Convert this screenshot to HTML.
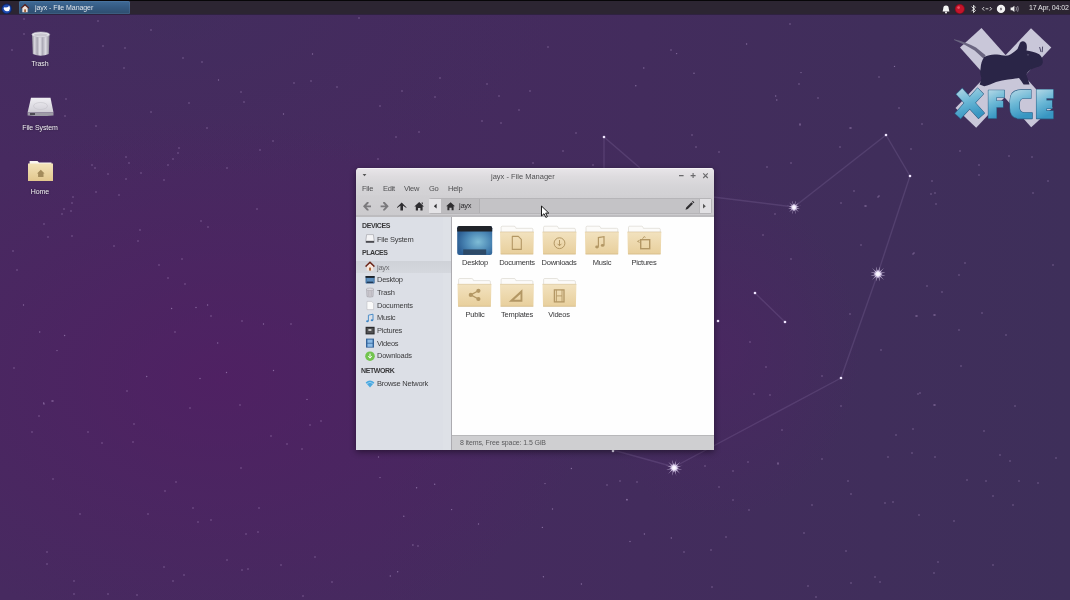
<!DOCTYPE html>
<html><head><meta charset="utf-8">
<style>
*{margin:0;padding:0;box-sizing:border-box}
.t,.dlabel,.t7{-webkit-font-smoothing:antialiased;will-change:transform}
html,body{width:1070px;height:600px;overflow:hidden}
body{position:relative;font-family:"Liberation Sans",sans-serif;
background:linear-gradient(90deg,#472a60 0%,#462a5f 35%,#432c5d 60%,#402e5b 82%,#3e2f5a 100%);}
.abs{position:absolute}
#glow{left:0;top:0;width:1070px;height:600px;
background:radial-gradient(ellipse 380px 260px at 220px 380px,rgba(82,30,100,0.75),rgba(82,30,100,0) 100%),radial-gradient(ellipse 380px 160px at 180px 20px,rgba(62,48,92,0.45),rgba(62,48,92,0) 100%),radial-gradient(ellipse 140px 170px at 720px 350px,rgba(78,36,100,0.55),rgba(78,36,100,0) 100%);}
#panel{left:0;top:0;width:1070px;height:14px;background:#2c2532;border-top:1px solid #070608}
.dlabel{color:#f2f0f4;font-size:7px;letter-spacing:-0.1px;text-shadow:0 0 2px rgba(0,0,0,0.6);white-space:nowrap;text-align:center;width:60px}
#win{left:356px;top:168px;width:357.6px;height:281.6px;border-radius:4px 4px 0 0;overflow:hidden;
box-shadow:0 2px 6px rgba(0,0,0,0.45);background:#d4d4d6}
#win .t{white-space:nowrap;color:#4a4a4c;font-size:7.5px;letter-spacing:-0.25px}
</style></head><body>
<div id="glow" class="abs"></div>
<svg id="sky" class="abs" style="left:0;top:0" width="1070" height="600" viewBox="0 0 1070 600">
<g fill="#b9a0d2" fill-opacity="0.55">
<circle cx="24.0" cy="19.0" r="0.7"/>
<circle cx="98.0" cy="21.0" r="0.7"/>
<circle cx="151.0" cy="30.0" r="0.7"/>
<circle cx="24.0" cy="34.0" r="0.7"/>
<circle cx="12.0" cy="50.0" r="0.7"/>
<circle cx="103.0" cy="46.0" r="0.7"/>
<circle cx="125.0" cy="48.0" r="0.7"/>
<circle cx="183.0" cy="58.0" r="0.7"/>
<circle cx="202.0" cy="62.0" r="0.7"/>
<circle cx="124.0" cy="68.0" r="0.7"/>
<circle cx="218.5" cy="80.0" r="0.7"/>
<circle cx="241.0" cy="92.0" r="0.7"/>
<circle cx="244.0" cy="102.0" r="0.7"/>
<circle cx="189.0" cy="103.0" r="0.7"/>
<circle cx="151.0" cy="112.0" r="0.7"/>
<circle cx="66.0" cy="99.0" r="0.7"/>
<circle cx="65.0" cy="116.0" r="0.7"/>
<circle cx="96.0" cy="126.0" r="0.7"/>
<circle cx="207.0" cy="128.0" r="0.7"/>
<circle cx="179.0" cy="148.0" r="0.7"/>
<circle cx="126.0" cy="157.0" r="0.7"/>
<circle cx="129.0" cy="163.0" r="0.7"/>
<circle cx="178.0" cy="153.0" r="0.7"/>
<circle cx="173.0" cy="159.0" r="0.7"/>
<circle cx="168.0" cy="165.0" r="0.7"/>
<circle cx="141.0" cy="173.0" r="0.7"/>
<circle cx="126.0" cy="179.0" r="0.7"/>
<circle cx="164.0" cy="180.0" r="0.7"/>
<circle cx="92.0" cy="165.0" r="0.7"/>
<circle cx="95.0" cy="168.0" r="0.7"/>
<circle cx="108.0" cy="174.0" r="0.7"/>
<circle cx="260.0" cy="150.0" r="0.7"/>
<circle cx="227.0" cy="168.0" r="0.7"/>
<circle cx="96.0" cy="192.0" r="0.7"/>
<circle cx="119.0" cy="195.0" r="0.7"/>
<circle cx="73.0" cy="197.0" r="0.7"/>
<circle cx="72.0" cy="203.0" r="0.7"/>
<circle cx="64.0" cy="209.0" r="0.7"/>
<circle cx="71.0" cy="211.0" r="0.7"/>
<circle cx="62.0" cy="214.0" r="0.7"/>
<circle cx="44.0" cy="224.0" r="0.7"/>
<circle cx="48.0" cy="237.0" r="0.7"/>
<circle cx="72.0" cy="236.0" r="0.7"/>
<circle cx="114.0" cy="246.0" r="0.7"/>
<circle cx="13.0" cy="251.0" r="0.7"/>
<circle cx="17.0" cy="270.0" r="0.7"/>
<circle cx="140.0" cy="230.0" r="0.7"/>
<circle cx="138.0" cy="241.0" r="0.7"/>
<circle cx="201.0" cy="221.0" r="0.7"/>
<circle cx="208.0" cy="227.0" r="0.7"/>
<circle cx="257.0" cy="209.0" r="0.7"/>
<circle cx="182.0" cy="259.0" r="0.7"/>
<circle cx="159.0" cy="265.0" r="0.7"/>
<circle cx="168.0" cy="278.0" r="0.7"/>
<circle cx="185.0" cy="284.0" r="0.7"/>
<circle cx="44.0" cy="404.0" r="0.7"/>
<circle cx="53.0" cy="401.0" r="0.7"/>
<circle cx="39.0" cy="416.0" r="0.7"/>
<circle cx="32.0" cy="432.0" r="0.7"/>
<circle cx="88.0" cy="432.0" r="0.7"/>
<circle cx="102.0" cy="443.0" r="0.7"/>
<circle cx="134.0" cy="424.0" r="0.7"/>
<circle cx="133.0" cy="442.0" r="0.7"/>
<circle cx="190.0" cy="408.0" r="0.7"/>
<circle cx="240.0" cy="405.0" r="0.7"/>
<circle cx="271.0" cy="436.0" r="0.7"/>
<circle cx="287.0" cy="444.0" r="0.7"/>
<circle cx="302.0" cy="449.0" r="0.7"/>
<circle cx="310.0" cy="425.0" r="0.7"/>
<circle cx="321.0" cy="421.0" r="0.7"/>
<circle cx="241.0" cy="468.0" r="0.7"/>
<circle cx="176.0" cy="482.0" r="0.7"/>
<circle cx="165.0" cy="491.0" r="0.7"/>
<circle cx="53.0" cy="479.0" r="0.7"/>
<circle cx="80.0" cy="514.0" r="0.7"/>
<circle cx="148.0" cy="514.0" r="0.7"/>
<circle cx="193.0" cy="508.0" r="0.7"/>
<circle cx="198.0" cy="522.0" r="0.7"/>
<circle cx="211.0" cy="520.0" r="0.7"/>
<circle cx="259.0" cy="508.0" r="0.7"/>
<circle cx="246.0" cy="534.0" r="0.7"/>
<circle cx="258.0" cy="532.0" r="0.7"/>
<circle cx="47.0" cy="552.0" r="0.7"/>
<circle cx="47.0" cy="564.0" r="0.7"/>
<circle cx="164.0" cy="567.0" r="0.7"/>
<circle cx="184.0" cy="575.0" r="0.7"/>
<circle cx="173.0" cy="581.0" r="0.7"/>
<circle cx="227.0" cy="560.0" r="0.7"/>
<circle cx="242.0" cy="570.0" r="0.7"/>
<circle cx="248.0" cy="569.0" r="0.7"/>
<circle cx="281.0" cy="565.0" r="0.7"/>
<circle cx="315.0" cy="557.0" r="0.7"/>
<circle cx="332.0" cy="582.0" r="0.7"/>
<circle cx="74.0" cy="581.0" r="0.7"/>
<circle cx="74.0" cy="594.0" r="0.7"/>
<circle cx="108.0" cy="594.0" r="0.7"/>
<circle cx="137.0" cy="595.0" r="0.7"/>
<circle cx="303.0" cy="596.0" r="0.7"/>
<circle cx="841.0" cy="406.0" r="0.7"/>
<circle cx="935.0" cy="405.0" r="0.7"/>
<circle cx="1015.0" cy="406.0" r="0.7"/>
<circle cx="782.0" cy="430.0" r="0.7"/>
<circle cx="896.0" cy="435.0" r="0.7"/>
<circle cx="913.0" cy="429.0" r="0.7"/>
<circle cx="984.0" cy="431.0" r="0.7"/>
<circle cx="748.0" cy="462.0" r="0.7"/>
<circle cx="778.0" cy="464.0" r="0.7"/>
<circle cx="822.0" cy="459.0" r="0.7"/>
<circle cx="705.0" cy="466.0" r="0.7"/>
<circle cx="733.0" cy="471.0" r="0.7"/>
<circle cx="888.0" cy="457.0" r="0.7"/>
<circle cx="912.0" cy="453.0" r="0.7"/>
<circle cx="935.0" cy="457.0" r="0.7"/>
<circle cx="1000.0" cy="455.0" r="0.7"/>
<circle cx="1010.0" cy="461.0" r="0.7"/>
<circle cx="1056.0" cy="458.0" r="0.7"/>
<circle cx="719.0" cy="487.0" r="0.7"/>
<circle cx="733.0" cy="500.0" r="0.7"/>
<circle cx="749.0" cy="510.0" r="0.7"/>
<circle cx="848.0" cy="481.0" r="0.7"/>
<circle cx="851.0" cy="494.0" r="0.7"/>
<circle cx="812.0" cy="505.0" r="0.7"/>
<circle cx="885.0" cy="503.0" r="0.7"/>
<circle cx="893.0" cy="502.0" r="0.7"/>
<circle cx="967.0" cy="480.0" r="0.7"/>
<circle cx="986.0" cy="481.0" r="0.7"/>
<circle cx="1019.0" cy="481.0" r="0.7"/>
<circle cx="1038.0" cy="483.0" r="0.7"/>
<circle cx="993.0" cy="496.0" r="0.7"/>
<circle cx="1013.0" cy="505.0" r="0.7"/>
<circle cx="919.0" cy="515.0" r="0.7"/>
<circle cx="954.0" cy="521.0" r="0.7"/>
<circle cx="726.0" cy="537.0" r="0.7"/>
<circle cx="711.0" cy="550.0" r="0.7"/>
<circle cx="804.0" cy="533.0" r="0.7"/>
<circle cx="846.0" cy="551.0" r="0.7"/>
<circle cx="938.0" cy="562.0" r="0.7"/>
<circle cx="934.0" cy="573.0" r="0.7"/>
<circle cx="993.0" cy="565.0" r="0.7"/>
<circle cx="712.0" cy="587.0" r="0.7"/>
<circle cx="808.0" cy="586.0" r="0.7"/>
<circle cx="851.0" cy="583.0" r="0.7"/>
<circle cx="875.0" cy="577.0" r="0.7"/>
<circle cx="880.0" cy="582.0" r="0.7"/>
<circle cx="816.0" cy="597.0" r="0.7"/>
<circle cx="850.0" cy="128.0" r="0.7"/>
<circle cx="840.0" cy="147.0" r="0.7"/>
<circle cx="911.0" cy="149.0" r="0.7"/>
<circle cx="960.0" cy="151.0" r="0.7"/>
<circle cx="922.0" cy="124.0" r="0.7"/>
<circle cx="1009.0" cy="156.0" r="0.7"/>
<circle cx="1032.0" cy="157.0" r="0.7"/>
<circle cx="979.0" cy="165.0" r="0.7"/>
<circle cx="979.0" cy="175.0" r="0.7"/>
<circle cx="854.0" cy="191.0" r="0.7"/>
<circle cx="841.0" cy="203.0" r="0.7"/>
<circle cx="866.0" cy="206.0" r="0.7"/>
<circle cx="879.0" cy="196.0" r="0.7"/>
<circle cx="932.0" cy="181.0" r="0.7"/>
<circle cx="935.0" cy="193.0" r="0.7"/>
<circle cx="936.0" cy="204.0" r="0.7"/>
<circle cx="1048.0" cy="181.0" r="0.7"/>
<circle cx="1033.0" cy="193.0" r="0.7"/>
<circle cx="861.0" cy="245.0" r="0.7"/>
<circle cx="913.0" cy="254.0" r="0.7"/>
<circle cx="965.0" cy="263.0" r="0.7"/>
<circle cx="959.0" cy="275.0" r="0.7"/>
<circle cx="927.0" cy="286.0" r="0.7"/>
<circle cx="942.0" cy="292.0" r="0.7"/>
<circle cx="1053.0" cy="265.0" r="0.7"/>
<circle cx="917.0" cy="316.0" r="0.7"/>
<circle cx="935.0" cy="315.0" r="0.7"/>
<circle cx="982.0" cy="313.0" r="0.7"/>
<circle cx="850.0" cy="314.0" r="0.7"/>
<circle cx="959.0" cy="330.0" r="0.7"/>
<circle cx="1006.0" cy="335.0" r="0.7"/>
<circle cx="881.0" cy="350.0" r="0.7"/>
<circle cx="961.0" cy="366.0" r="0.7"/>
<circle cx="918.0" cy="394.0" r="0.7"/>
<circle cx="822.0" cy="376.0" r="0.7"/>
<circle cx="800.0" cy="125.0" r="0.7"/>
<circle cx="692.0" cy="135.0" r="0.7"/>
<circle cx="719.0" cy="152.0" r="0.7"/>
<circle cx="696.0" cy="147.0" r="0.7"/>
<circle cx="767.0" cy="167.0" r="0.7"/>
<circle cx="791.0" cy="163.0" r="0.7"/>
<circle cx="593.0" cy="165.0" r="0.7"/>
<circle cx="865.0" cy="206.0" r="0.7"/>
<circle cx="878.0" cy="197.0" r="0.7"/>
<circle cx="775.0" cy="214.0" r="0.7"/>
<circle cx="763.0" cy="235.0" r="0.7"/>
<circle cx="791.0" cy="259.0" r="0.7"/>
<circle cx="914.0" cy="253.0" r="0.7"/>
<circle cx="931.0" cy="194.0" r="0.7"/>
<circle cx="750.0" cy="342.0" r="0.7"/>
<circle cx="766.0" cy="367.0" r="0.7"/>
<circle cx="754.0" cy="394.0" r="0.7"/>
<circle cx="770.0" cy="395.0" r="0.7"/>
<circle cx="778.0" cy="463.0" r="0.7"/>
<circle cx="620.0" cy="481.0" r="0.7"/>
<circle cx="637.0" cy="482.0" r="0.7"/>
<circle cx="607.0" cy="485.0" r="0.7"/>
<circle cx="627.0" cy="500.0" r="0.7"/>
<circle cx="916.0" cy="316.0" r="0.7"/>
<circle cx="934.0" cy="315.0" r="0.7"/>
<circle cx="920.0" cy="393.0" r="0.7"/>
<circle cx="934.0" cy="405.0" r="0.7"/>
<circle cx="576.0" cy="133.0" r="0.7"/>
<circle cx="563.0" cy="151.0" r="0.7"/>
<circle cx="359.0" cy="18.0" r="0.7"/>
<circle cx="312.5" cy="54.0" r="0.7"/>
<circle cx="548.0" cy="47.0" r="0.7"/>
<circle cx="294.0" cy="83.0" r="0.7"/>
<circle cx="311.0" cy="81.0" r="0.7"/>
<circle cx="337.0" cy="87.0" r="0.7"/>
<circle cx="440.0" cy="78.0" r="0.7"/>
<circle cx="402.0" cy="91.0" r="0.7"/>
<circle cx="435.0" cy="97.0" r="0.7"/>
<circle cx="487.0" cy="84.0" r="0.7"/>
<circle cx="499.0" cy="96.0" r="0.7"/>
<circle cx="530.0" cy="91.0" r="0.7"/>
<circle cx="519.0" cy="110.0" r="0.7"/>
<circle cx="380.0" cy="106.0" r="0.7"/>
<circle cx="283.5" cy="114.0" r="0.7"/>
<circle cx="482.0" cy="121.0" r="0.7"/>
<circle cx="501.0" cy="123.0" r="0.7"/>
<circle cx="419.0" cy="132.0" r="0.7"/>
<circle cx="396.0" cy="137.0" r="0.7"/>
<circle cx="273.0" cy="141.0" r="0.7"/>
<circle cx="378.0" cy="159.0" r="0.7"/>
<circle cx="533.0" cy="163.0" r="0.7"/>
<circle cx="23.5" cy="305.0" r="0.7"/>
<circle cx="171.6" cy="308.5" r="0.7"/>
<circle cx="196.0" cy="307.5" r="0.7"/>
<circle cx="207.6" cy="305.0" r="0.7"/>
<circle cx="211.0" cy="316.0" r="0.7"/>
<circle cx="242.0" cy="321.0" r="0.7"/>
<circle cx="263.5" cy="324.0" r="0.7"/>
<circle cx="291.0" cy="324.0" r="0.7"/>
<circle cx="39.7" cy="332.0" r="0.7"/>
<circle cx="64.6" cy="335.5" r="0.7"/>
<circle cx="175.0" cy="332.0" r="0.7"/>
<circle cx="57.0" cy="350.6" r="0.7"/>
<circle cx="217.7" cy="343.0" r="0.7"/>
<circle cx="14.0" cy="368.0" r="0.7"/>
<circle cx="146.7" cy="376.5" r="0.7"/>
<circle cx="200.0" cy="378.5" r="0.7"/>
<circle cx="226.5" cy="372.5" r="0.7"/>
<circle cx="273.5" cy="370.5" r="0.7"/>
<circle cx="127.0" cy="391.0" r="0.7"/>
<circle cx="307.0" cy="399.4" r="0.7"/>
<circle cx="43.7" cy="403.0" r="0.7"/>
<circle cx="52.0" cy="401.0" r="0.7"/>
<circle cx="378.5" cy="457.0" r="0.7"/>
<circle cx="380.0" cy="477.6" r="0.7"/>
<circle cx="416.6" cy="487.7" r="0.7"/>
<circle cx="434.7" cy="484.3" r="0.7"/>
<circle cx="451.6" cy="509.6" r="0.7"/>
<circle cx="403.8" cy="516.3" r="0.7"/>
<circle cx="478.5" cy="524.0" r="0.7"/>
<circle cx="545.0" cy="483.6" r="0.7"/>
<circle cx="571.4" cy="468.5" r="0.7"/>
<circle cx="552.5" cy="509.0" r="0.7"/>
<circle cx="542.4" cy="527.4" r="0.7"/>
<circle cx="626.9" cy="499.5" r="0.7"/>
<circle cx="644.4" cy="534.0" r="0.7"/>
<circle cx="630.0" cy="541.5" r="0.7"/>
<circle cx="671.3" cy="538.0" r="0.7"/>
<circle cx="684.0" cy="552.0" r="0.7"/>
<circle cx="412.9" cy="545.0" r="0.7"/>
<circle cx="418.0" cy="546.0" r="0.7"/>
<circle cx="397.7" cy="571.8" r="0.7"/>
<circle cx="390.3" cy="576.0" r="0.7"/>
<circle cx="543.4" cy="576.8" r="0.7"/>
<circle cx="581.4" cy="584.0" r="0.7"/>
<circle cx="790.0" cy="24.0" r="0.7"/>
<circle cx="746.6" cy="44.0" r="0.7"/>
<circle cx="671.0" cy="50.0" r="0.7"/>
<circle cx="676.6" cy="53.6" r="0.7"/>
<circle cx="643.8" cy="68.0" r="0.7"/>
<circle cx="635.8" cy="85.7" r="0.7"/>
<circle cx="694.0" cy="73.3" r="0.7"/>
<circle cx="801.0" cy="72.6" r="0.7"/>
<circle cx="799.0" cy="84.0" r="0.7"/>
<circle cx="775.7" cy="96.0" r="0.7"/>
<circle cx="776.8" cy="100.0" r="0.7"/>
<circle cx="818.0" cy="98.0" r="0.7"/>
<circle cx="879.0" cy="77.0" r="0.7"/>
<circle cx="894.5" cy="66.4" r="0.7"/>
<circle cx="899.0" cy="108.0" r="0.7"/>
<circle cx="800.0" cy="124.0" r="0.7"/>
<circle cx="851.0" cy="128.0" r="0.7"/>
</g>
<g stroke="#b09ad0" stroke-opacity="0.17" stroke-width="1.4">
<line x1="604" y1="137" x2="604" y2="170"/>
<line x1="604" y1="137" x2="640" y2="168"/>
<line x1="713" y1="197" x2="794" y2="207"/>
<line x1="794" y1="207" x2="886" y2="135"/>
<line x1="886" y1="135" x2="910" y2="176"/>
<line x1="910" y1="176" x2="878" y2="273"/>
<line x1="878" y1="273" x2="841" y2="378"/>
<line x1="841" y1="378" x2="674" y2="467"/>
<line x1="674" y1="467" x2="613" y2="450"/>
<line x1="755" y1="293" x2="785" y2="322"/>
</g>
<g fill="#f0e6ff">
<circle cx="604" cy="137" r="1.3"/>
<circle cx="886" cy="135" r="1.3"/>
<circle cx="910" cy="176" r="1.3"/>
<circle cx="755" cy="293" r="1.3"/>
<circle cx="785" cy="322" r="1.3"/>
<circle cx="718" cy="321" r="1.3"/>
<circle cx="841" cy="378" r="1.3"/>
<circle cx="613" cy="451" r="1.3"/>
</g>
<defs><radialGradient id="ray" cx="0.5" cy="0.5" r="0.5"><stop offset="0" stop-color="#fff" stop-opacity="1"/><stop offset="1" stop-color="#e8d8ff" stop-opacity="0"/></radialGradient><radialGradient id="sglow" cx="0.5" cy="0.5" r="0.5"><stop offset="0" stop-color="#fff" stop-opacity="1"/><stop offset="0.45" stop-color="#f4ecff" stop-opacity="0.9"/><stop offset="1" stop-color="#d0b8f0" stop-opacity="0"/></radialGradient></defs>
<g transform="translate(794,207.4) scale(0.8)"><ellipse rx="9.5" ry="1.05" fill="url(#ray)" transform="rotate(15)"/><ellipse rx="9.5" ry="1.05" fill="url(#ray)" transform="rotate(45)"/><ellipse rx="9.5" ry="1.05" fill="url(#ray)" transform="rotate(75)"/><ellipse rx="9.5" ry="1.05" fill="url(#ray)" transform="rotate(105)"/><ellipse rx="9.5" ry="1.05" fill="url(#ray)" transform="rotate(135)"/><ellipse rx="9.5" ry="1.05" fill="url(#ray)" transform="rotate(165)"/><circle r="4.8" fill="url(#sglow)"/></g>
<g transform="translate(878,274) scale(0.95)"><ellipse rx="9.5" ry="1.05" fill="url(#ray)" transform="rotate(15)"/><ellipse rx="9.5" ry="1.05" fill="url(#ray)" transform="rotate(45)"/><ellipse rx="9.5" ry="1.05" fill="url(#ray)" transform="rotate(75)"/><ellipse rx="9.5" ry="1.05" fill="url(#ray)" transform="rotate(105)"/><ellipse rx="9.5" ry="1.05" fill="url(#ray)" transform="rotate(135)"/><ellipse rx="9.5" ry="1.05" fill="url(#ray)" transform="rotate(165)"/><circle r="4.8" fill="url(#sglow)"/></g>
<g transform="translate(674.2,467.8) scale(0.95)"><ellipse rx="9.5" ry="1.05" fill="url(#ray)" transform="rotate(15)"/><ellipse rx="9.5" ry="1.05" fill="url(#ray)" transform="rotate(45)"/><ellipse rx="9.5" ry="1.05" fill="url(#ray)" transform="rotate(75)"/><ellipse rx="9.5" ry="1.05" fill="url(#ray)" transform="rotate(105)"/><ellipse rx="9.5" ry="1.05" fill="url(#ray)" transform="rotate(135)"/><ellipse rx="9.5" ry="1.05" fill="url(#ray)" transform="rotate(165)"/><circle r="4.8" fill="url(#sglow)"/></g>
</svg>
<div id="panel" class="abs">
 <svg class="abs" style="left:0;top:0" width="1070" height="15">
  <circle cx="6.7" cy="7.85" r="5.3" fill="#0e2566"/>
  <circle cx="6.7" cy="7.85" r="4.4" fill="#1f4cb0"/>
  <path d="M3.6,7.2 Q4.2,5.6 6,6.6 L8.2,6 L9,4.4 L9.6,5.6 L10,7.4 Q9.8,10 7.2,10.2 Q4.4,10.4 3.6,7.2Z" fill="#fff"/>
 </svg>
 <div class="abs" style="left:19.3px;top:0px;width:110.7px;height:13px;border-radius:1.5px;background:linear-gradient(#3f6a96,#345a82 50%,#2e4d6e);box-shadow:inset 0 0 0 0.5px rgba(120,160,200,0.35)"></div>
 <svg class="abs" style="left:20.3px;top:1.8px" width="10" height="10" viewBox="0 0 12 12">
  <path d="M1.5,6.2 L6,2 L10.5,6.2" fill="none" stroke="#5a1f1a" stroke-width="1.6"/>
  <path d="M2.8,6 L6,3.2 L9.2,6 L9.2,11 L2.8,11Z" fill="#f3e2d8"/>
  <rect x="5" y="7.6" width="2.2" height="3.4" fill="#a0623a"/>
 </svg>
 <div class="abs t7" style="left:34.7px;top:1px;color:#dfe4ea;font-size:7px;letter-spacing:-0.07px;line-height:12px;white-space:nowrap">jayx - File Manager</div>
 <svg class="abs" style="left:930px;top:0" width="140" height="15" viewBox="930 0 140 15">
  <path d="M946,4.6 Q948.8,4.6 948.8,8 L949.4,10.6 L942.6,10.6 L943.2,8 Q943.2,4.6 946,4.6Z" fill="#f4f4f4"/>
  <circle cx="946" cy="11.6" r="1" fill="#f4f4f4"/>
  <circle cx="959.8" cy="8" r="5" fill="#8e0c1e"/>
  <circle cx="959.8" cy="8" r="4.2" fill="#c4142a"/>
  <circle cx="958.6" cy="6.6" r="1.4" fill="#f06070" opacity="0.8"/>
  <path d="M971.6,5.6 L975.4,9.6 L973.5,11.6 L973.5,4.2 L975.4,6.2 L971.6,10.2" fill="none" stroke="#e8e8e8" stroke-width="0.9"/>
  <path d="M984.2,6 L982.4,7.8 L984.2,9.6 M989.8,6 L991.6,7.8 L989.8,9.6 M985.6,7.8 L988.4,7.8" fill="none" stroke="#e8e8e8" stroke-width="0.9"/>
  <circle cx="1001" cy="7.9" r="4.2" fill="#f4f4f4"/>
  <path d="M1001.6,5.2 L999.8,8.4 L1001.2,8.4 L1000.4,10.6 L1002.2,7.4 L1000.8,7.4Z" fill="#2c2532"/>
  <path d="M1010.6,6.6 L1012.2,6.6 L1014.4,4.8 L1014.4,11 L1012.2,9.2 L1010.6,9.2Z" fill="#f0f0f0"/>
  <path d="M1016,6 Q1017,7.9 1016,9.8 M1017.6,5 Q1019,7.9 1017.6,10.8" fill="none" stroke="#9a96a0" stroke-width="0.9"/>
 </svg>
 <div class="abs t7" style="left:1028.8px;top:1px;color:#e6e6e8;font-size:7px;letter-spacing:-0.12px;line-height:12px;white-space:nowrap">17 Apr, 04:02</div>
</div>
<div class="abs" style="left:0;top:14px;width:1070px;height:1px;background:#2f2240"></div>
<div id="desk">
 <svg class="abs" style="left:28px;top:29.8px" width="26" height="28" viewBox="0 0 26 28">
  <defs>
   <linearGradient id="can" x1="0" x2="1" y1="0" y2="0">
    <stop offset="0" stop-color="#8f8c98"/><stop offset="0.15" stop-color="#d8d6de"/><stop offset="0.3" stop-color="#a9a6b2"/>
    <stop offset="0.45" stop-color="#e4e2ea"/><stop offset="0.6" stop-color="#aeabb8"/><stop offset="0.78" stop-color="#dcdae2"/><stop offset="1" stop-color="#8a8794"/>
   </linearGradient>
  </defs>
  <path d="M4,5 L21.5,5 L20.8,24 Q12.8,27.5 4.8,24Z" fill="url(#can)"/>
  <ellipse cx="12.8" cy="4.6" rx="8.9" ry="2.6" fill="#e9e8ee" stroke="#b9b7c2" stroke-width="0.6"/>
  <ellipse cx="12.8" cy="4.9" rx="7" ry="1.6" fill="#c9c7d0"/>
 </svg>
 <div class="abs dlabel" style="left:10px;top:60px;line-height:7px">Trash</div>
 <svg class="abs" style="left:27px;top:97px" width="28" height="20" viewBox="0 0 28 20">
  <defs>
   <linearGradient id="drv" x1="0" x2="0" y1="0" y2="1">
    <stop offset="0" stop-color="#f0eff3"/><stop offset="1" stop-color="#cfcdd5"/>
   </linearGradient>
  </defs>
  <path d="M4,0.8 L23.5,0.8 L26.5,15.5 L0.6,15.5Z" fill="url(#drv)"/>
  <ellipse cx="13.5" cy="9" rx="7" ry="3.5" fill="none" stroke="#c4c2ca" stroke-width="0.6"/>
  <path d="M0.6,15.5 L26.5,15.5 L26.5,18.6 Q13.5,19.6 0.6,18.6Z" fill="#9e9ca6"/>
  <rect x="3" y="16.2" width="5" height="1.6" fill="#3a3840"/>
 </svg>
 <div class="abs dlabel" style="left:9.5px;top:124px;line-height:7px">File System</div>
 <svg class="abs" style="left:27px;top:160px" width="27" height="22" viewBox="0 0 27 22">
  <defs>
   <linearGradient id="hfold" x1="0" x2="0" y1="0" y2="1">
    <stop offset="0" stop-color="#f3e3b8"/><stop offset="1" stop-color="#e2c78e"/>
   </linearGradient>
  </defs>
  <path d="M2.6,1 L10.5,1 L12,2.4 L24.5,2.4 L24.5,6 L2.6,6Z" fill="#faf6f0"/>
  <path d="M1,3.5 L26,3.5 L26,21 L1,21Z" fill="url(#hfold)"/>
  <path d="M13.8,9.8 L17.6,13.4 L16.5,13.4 L16.5,17 L11.1,17 L11.1,13.4 L10,13.4Z" fill="#a48c5c"/>
 </svg>
 <div class="abs dlabel" style="left:10.4px;top:188px;line-height:7px">Home</div>
</div>
<svg id="logo" class="abs" style="left:940px;top:20px" width="130" height="115" viewBox="940 20 130 115">
 <defs>
  <linearGradient id="xf" x1="0" x2="0.3" y1="0" y2="1">
   <stop offset="0" stop-color="#b4d8e6"/><stop offset="0.5" stop-color="#6cb8d6"/><stop offset="1" stop-color="#3896c2"/>
  </linearGradient>
 </defs>
 <g fill="#c9c7d9">
  <path d="M960,47.5 L981.5,28 L1052.7,107.8 L1031.2,127.3Z"/>
  <path d="M1051.3,47.5 L1031,28.2 L955.5,108 L976.2,127.8Z"/>
 </g>
 <path d="M954,39.2 Q966,41.8 976,47.6 L985.6,55.2 L983.4,58.4 L974.6,50.6 Q965,44.2 954,39.9Z" fill="#6a6580"/>
 <path d="M984.2,57 C988,55 993,54 997,54.6 C1001,55.2 1005,56 1008,55.5 C1011,54.5 1014,52 1017.5,49 L1019.5,44 C1020.5,41 1023.5,40.5 1025.5,42.5 C1027,44 1027.2,47 1026.5,50.5 C1030,51 1035,52 1039.2,54.2 C1041.5,56 1043,59 1042.8,62.5 C1042,65.5 1040,66.5 1036,67.5 C1032,68.5 1028,71 1026.3,74.4 C1027,77 1028.5,80 1029.5,84.5 L1023.6,84.5 C1022,82 1020.5,80 1019,78 C1015,78.5 1011,79 1008,79.5 C1004,80 1000,81 996,82 C992,83.5 988,85.5 984.2,86.3 L979.6,84.5 C980.5,82 981,80 981.4,78 C980.2,75 979.8,72 980.5,69 C980.8,64 982,60 984.2,57Z" fill="#2a2547"/>
 <path d="M1039.6,47 L1041,52 M1042.6,46.6 L1042.2,52.2" stroke="#2a2547" stroke-width="0.8"/>
 <circle cx="1028" cy="54.8" r="0.6" fill="#8a86a0"/>
 <g fill="none" stroke="#2a5f86" stroke-width="1.1" stroke-linejoin="round">
  <path d="M956.3,94.2 L962.2,88.4 L984.4,113 L978.5,118.3Z"/>
  <path d="M977.6,88.1 L983.4,93.9 L960.6,118.6 L955.1,113.4Z"/>
  <path d="M988.4,90.2 L1004.4,90.2 L1004.4,97.3 L996.4,97.3 L996.4,101 L1003,101 L1003,107.2 L996.4,107.2 L996.4,118.3 L988.4,118.3Z"/>
  <path d="M1031,89.9 L1031,98.3 L1024,98.3 Q1019.3,98.3 1019.3,104 L1019.3,107 Q1019.3,112.7 1024,112.7 L1032.2,112.7 L1032.2,118.6 L1020,118.6 Q1010,118.6 1010,108 L1010,101 Q1010,89.9 1021,89.9Z"/>
  <path d="M1036.5,89.6 L1053.2,89.6 L1053.2,98.3 L1046.4,98.3 L1046.4,100.4 L1052,100.4 L1052,108.4 L1046.4,108.4 L1046.4,110.9 L1053.2,110.9 L1053.2,118.6 L1036.5,118.6Z"/>
 </g>
 <g fill="url(#xf)">
  <path d="M956.3,94.2 L962.2,88.4 L984.4,113 L978.5,118.3Z"/>
  <path d="M977.6,88.1 L983.4,93.9 L960.6,118.6 L955.1,113.4Z"/>
  <path d="M988.4,90.2 L1004.4,90.2 L1004.4,97.3 L996.4,97.3 L996.4,101 L1003,101 L1003,107.2 L996.4,107.2 L996.4,118.3 L988.4,118.3Z"/>
  <path d="M1031,89.9 L1031,98.3 L1024,98.3 Q1019.3,98.3 1019.3,104 L1019.3,107 Q1019.3,112.7 1024,112.7 L1032.2,112.7 L1032.2,118.6 L1020,118.6 Q1010,118.6 1010,108 L1010,101 Q1010,89.9 1021,89.9Z"/>
  <path d="M1036.5,89.6 L1053.2,89.6 L1053.2,98.3 L1046.4,98.3 L1046.4,100.4 L1052,100.4 L1052,108.4 L1046.4,108.4 L1046.4,110.9 L1053.2,110.9 L1053.2,118.6 L1036.5,118.6Z"/>
 </g>
</svg>
<div id="win" class="abs">
 <div class="abs" style="left:0;top:0;width:358px;height:27px;background:linear-gradient(#e9e6ea 0%,#dedcdf 30%,#d5d4d7 70%,#d2d1d4 100%)"></div>
 <div class="abs" style="left:0;top:0;width:358px;height:1px;background:#f4f2f5"></div>
 <svg class="abs" style="left:0;top:0" width="358" height="50" viewBox="0 0 358 50">
  <path d="M6.6,6 L10.4,6 L8.5,8.2Z" fill="#555"/>
  <path d="M323,7.6 L327.6,7.6" stroke="#6a6a6c" stroke-width="1.1"/>
  <path d="M334.6,7.6 L339.6,7.6 M337.1,5.1 L337.1,10.1" stroke="#6a6a6c" stroke-width="1.1"/>
  <path d="M347.2,5.4 L351.8,10 M351.8,5.4 L347.2,10" stroke="#6a6a6c" stroke-width="1.1"/>
 </svg>
 <div class="abs t" style="left:134.9px;top:4.5px;line-height:8px;color:#505052;font-size:7.5px;letter-spacing:0">jayx - File Manager</div>
 <div class="abs t" style="left:6px;top:17px;line-height:8px;color:#505052">File</div>
 <div class="abs t" style="left:27px;top:17px;line-height:8px;color:#505052">Edit</div>
 <div class="abs t" style="left:47.6px;top:17px;line-height:8px;color:#505052">View</div>
 <div class="abs t" style="left:72.8px;top:17px;line-height:8px;color:#505052">Go</div>
 <div class="abs t" style="left:91.9px;top:17px;line-height:8px;color:#505052">Help</div>
 <!-- toolbar -->
 <div class="abs" style="left:0;top:27px;width:358px;height:22px;background:linear-gradient(#d1d0d3,#cbcacd)"></div>
 <div class="abs" style="left:0;top:47px;width:358px;height:2px;background:#bdbcbf"></div>
 <div class="abs" style="left:72.5px;top:29.8px;width:283px;height:16px;background:#c4c3c6;border:1px solid #b6b5b8;border-radius:1.5px"></div>
 <div class="abs" style="left:73px;top:30.6px;width:12.4px;height:14.4px;background:#e4e3e6"></div>
 <div class="abs" style="left:85.4px;top:30.6px;width:38.5px;height:14.4px;background:#bdbcbf;border-right:1px solid #b0afb2"></div>
 <div class="abs" style="left:342.5px;top:30.6px;width:12.5px;height:14.4px;background:#e2e1e4;border-left:1px solid #b9b8bb"></div>
 <svg class="abs" style="left:0;top:27px" width="358" height="22" viewBox="0 27 358 22">
  <g fill="#7a797c">
   <path d="M7,38.2 L11,34 L12.6,34 L12.6,35.2 L10.4,37.4 L15,37.4 L15,39.2 L10.4,39.2 L12.6,41.4 L12.6,42.5 L11,42.5Z"/>
   <path d="M32.7,38.2 L28.7,34 L27.1,34 L27.1,35.2 L29.3,37.4 L24.6,37.4 L24.6,39.2 L29.3,39.2 L27.1,41.4 L27.1,42.5 L28.7,42.5Z"/>
  </g>
  <g fill="#2e2d30">
   <path d="M45.7,34.6 L50.4,39.2 L50.4,40 L47,37.8 L47,42.6 L44.4,42.6 L44.4,37.8 L41,40 L41,39.2Z"/>
   <path d="M63.2,34 L68,38.4 L66.6,38.4 L66.6,42.6 L64.4,42.6 L64.4,40 L62,40 L62,42.6 L59.8,42.6 L59.8,38.4 L58.3,38.4Z M65.6,34.6 L66.8,34.6 L66.8,36.6 L65.6,35.6Z"/>
   <path d="M80.6,35.8 L80.6,40.6 L77.8,38.2Z"/>
   <path d="M94.6,34.2 L99,38.2 L97.6,38.2 L97.6,42.2 L95.6,42.2 L95.6,39.8 L93.4,39.8 L93.4,42.2 L91.4,42.2 L91.4,38.2 L90.1,38.2Z"/>
   <path d="M347,35.8 L347,40.6 L349.8,38.2Z" fill="#555"/>
   <path d="M329.5,41.8 L330.2,39.4 L335.4,34.2 L337,35.8 L331.8,41Z M336,33.6 L336.8,32.8 L338.4,34.4 L337.6,35.2Z"/>
  </g>
 </svg>
 <div class="abs t" style="left:102.5px;top:34px;line-height:8px;color:#2e2d30;font-size:7.5px">jayx</div>
 <!-- sidebar -->
 <div class="abs" style="left:0;top:49px;width:95.2px;height:233px;background:#dcdfe6"></div>
 <div class="abs" style="left:87px;top:49px;width:8.2px;height:233px;background:#dee1e7"></div>
 <div class="abs" style="left:95.2px;top:49px;width:1px;height:233px;background:#acabb0"></div>
 <div class="abs" style="left:0;top:92.5px;width:95.2px;height:12.5px;background:linear-gradient(#cfd2d8,#d5d8de)"></div>
 <svg class="abs" style="left:0;top:49px" width="95" height="233" viewBox="0 49 95 233">
<path d="M10.6,66.6 L17.4,66.6 L18.2,73 L9.8,73Z" fill="#f4f4f6" stroke="#9c9ca2" stroke-width="0.6"/><rect x="9.8" y="73" width="8.4" height="1.8" fill="#4a4a50"/>
<path d="M9.6,98.6 L14,94.4 L18.4,98.6" fill="none" stroke="#6a2418" stroke-width="1.5"/><path d="M10.8,98.4 L14,95.6 L17.2,98.4 L17.2,102.6 L10.8,102.6Z" fill="#f7e6dc"/><rect x="13" y="99.6" width="2" height="3" fill="#b06a3a"/>
<rect x="9.6" y="108" width="9" height="7.4" rx="0.6" fill="#2e5d8e"/><rect x="9.6" y="108" width="9" height="1.8" fill="#1e2228"/><rect x="10.4" y="110" width="7.4" height="4.4" fill="#5d8fbf"/><rect x="11" y="113.6" width="6" height="1.4" fill="#223a58"/>
<path d="M10.6,121.2 L17.4,121.2 L17,128.6 Q14,129.6 11,128.6Z" fill="#d2d0d6" stroke="#8e8c94" stroke-width="0.5"/><ellipse cx="14" cy="121.2" rx="3.6" ry="1.1" fill="#e8e6ec" stroke="#8e8c94" stroke-width="0.5"/><path d="M12.4,122.6 L12.4,128 M14,122.8 L14,128.4 M15.6,122.6 L15.6,128" stroke="#a4a2aa" stroke-width="0.5"/>
<path d="M11,133.4 L15.6,133.4 L17.6,135.4 L17.6,141.6 L11,141.6Z" fill="#fafafa" stroke="#b4b4b8" stroke-width="0.5"/>
<path d="M12.4,153 L12.4,147.2 L17,146.2 L17,152" fill="none" stroke="#3d86c6" stroke-width="0.9"/><ellipse cx="11.4" cy="153.2" rx="1.3" ry="1" fill="#3d86c6"/><ellipse cx="16" cy="152.2" rx="1.3" ry="1" fill="#3d86c6"/>
<rect x="9.6" y="158.8" width="9" height="7.6" fill="#2a2a2c"/><rect x="10.6" y="160" width="7" height="5.4" fill="#505052"/><rect x="12.4" y="161" width="3" height="2" fill="#c8c8c8"/>
<rect x="10" y="170.6" width="8" height="9" fill="#34649a"/><rect x="11.4" y="171.6" width="5.2" height="3.2" fill="#8cbbe6"/><rect x="11.4" y="175.6" width="5.2" height="3.2" fill="#8cbbe6"/>
<circle cx="14" cy="188.2" r="4.8" fill="#72c44e"/><path d="M14,185.6 L14,189.8 M12.2,188.2 L14,190.2 L15.8,188.2" fill="none" stroke="#fff" stroke-width="1"/>
<path d="M9.6,214.6 Q14,210.6 18.4,214.6 L14,219.4Z" fill="#4aa8e0"/><path d="M11,215.6 Q14,213 17,215.6" fill="none" stroke="#bfe4f8" stroke-width="0.6"/>
</svg>
<div class="abs t" style="left:5.5px;top:53.68px;line-height:7px;font-size:7px;font-weight:bold;color:#38383a;letter-spacing:-0.4px">DEVICES</div>
<div class="abs t" style="left:5.5px;top:81.18px;line-height:7px;font-size:7px;font-weight:bold;color:#38383a;letter-spacing:-0.5px">PLACES</div>
<div class="abs t" style="left:5.4px;top:199.18px;line-height:7px;font-size:7px;font-weight:bold;color:#38383a;letter-spacing:-0.4px">NETWORK</div>
<div class="abs t" style="left:21.0px;top:67.62px;line-height:7.5px;font-size:7.5px;color:#3c3c3e;letter-spacing:-0.25px">File System</div>
<div class="abs t" style="left:21.0px;top:96.12px;line-height:7.5px;font-size:7.5px;color:#6e6e72;letter-spacing:-0.25px">jayx</div>
<div class="abs t" style="left:21.0px;top:108.12px;line-height:7.5px;font-size:7.5px;color:#3c3c3e;letter-spacing:-0.25px">Desktop</div>
<div class="abs t" style="left:21.0px;top:120.62px;line-height:7.5px;font-size:7.5px;color:#3c3c3e;letter-spacing:-0.25px">Trash</div>
<div class="abs t" style="left:21.0px;top:133.62px;line-height:7.5px;font-size:7.5px;color:#3c3c3e;letter-spacing:-0.25px">Documents</div>
<div class="abs t" style="left:21.0px;top:146.42px;line-height:7.5px;font-size:7.5px;color:#3c3c3e;letter-spacing:-0.25px">Music</div>
<div class="abs t" style="left:21.0px;top:159.12px;line-height:7.5px;font-size:7.5px;color:#3c3c3e;letter-spacing:-0.25px">Pictures</div>
<div class="abs t" style="left:21.0px;top:171.82px;line-height:7.5px;font-size:7.5px;color:#3c3c3e;letter-spacing:-0.25px">Videos</div>
<div class="abs t" style="left:21.0px;top:184.42px;line-height:7.5px;font-size:7.5px;color:#3c3c3e;letter-spacing:-0.25px">Downloads</div>
<div class="abs t" style="left:21.0px;top:212.42px;line-height:7.5px;font-size:7.5px;color:#3c3c3e;letter-spacing:-0.25px">Browse Network</div>
<!-- content -->
 <div class="abs" style="left:96.2px;top:49px;width:262px;height:218px;background:#fefefe"></div>
 <div class="abs" style="left:96.2px;top:266.6px;width:262px;height:16px;background:#cfcfd1;border-top:1px solid #b8b8ba"></div>
 <div class="abs t" style="left:103.6px;top:270.5px;line-height:8px;color:#5a5a5c;font-size:7px;letter-spacing:-0.1px">8 items, Free space: 1.5 GiB</div>
<svg class="abs" style="left:96px;top:49px" width="262" height="218" viewBox="96 49 262 218">
<defs>
<linearGradient id="fb" x1="0" x2="0" y1="0" y2="1"><stop offset="0" stop-color="#f2e2bf"/><stop offset="1" stop-color="#e8cf9c"/></linearGradient>
<radialGradient id="dk" cx="0.6" cy="0.55" r="0.6"><stop offset="0" stop-color="#7fbdd6"/><stop offset="0.6" stop-color="#4a86b4"/><stop offset="1" stop-color="#2d5f94"/></radialGradient>
<g id="fold">
 <path d="M1.4,6.2 L1.4,1.4 Q1.4,0.2 2.6,0.2 L14.4,0.2 Q15.6,0.2 15.9,1.3 L16.2,2.3 L32,2.3 Q33.2,2.3 33.2,3.4 L33.2,6.2Z" fill="#fcfbf9" stroke="#cfcac0" stroke-width="0.5"/>
 <path d="M0.3,6 L34.2,6 L33.7,27.6 Q33.6,28.2 33,28.2 L1.4,28.2 Q0.8,28.2 0.8,27.6Z" fill="url(#fb)"/>
 <path d="M0.3,6 L34.2,6" stroke="#dcc69a" stroke-width="0.6"/>
 <path d="M0.9,28 L33.6,28" stroke="#cdb482" stroke-width="0.6"/>
</g>
</defs>
<g transform="translate(101.2,58)"><rect x="0" y="0" width="35" height="29" rx="2.2" fill="url(#dk)"/><path d="M0,2.2 Q0,0 2.2,0 L32.8,0 Q35,0 35,2.2 L35,5.6 L0,5.6Z" fill="#202329"/><rect x="6" y="23.4" width="23" height="5.4" fill="#2b4560" fill-opacity="0.9"/></g>
<use href="#fold" transform="translate(143.7,58)"/>
<path d="M156.29999999999998,68.4 L162.29999999999998,68.4 L165.29999999999998,71.4 L165.29999999999998,81.4 L156.29999999999998,81.4Z" stroke="#b39764" fill="none" stroke-width="1.1" stroke-linejoin="round"/>
<use href="#fold" transform="translate(186.2,58)"/>
<circle cx="203.5" cy="75.2" r="5.4" stroke="#b39764" fill="none" stroke-width="1"/><path d="M203.5,72 L203.5,77.6 M201.6,75.8 L203.5,77.8 L205.39999999999998,75.8" stroke="#b39764" fill="none" stroke-width="1"/>
<use href="#fold" transform="translate(228.6,58)"/>
<path d="M242.4,78.8 L242.4,69.6 L248.0,68.6 L248.0,77.2" stroke="#b39764" fill="none" stroke-width="1.2"/><ellipse cx="241.0" cy="79" rx="1.8" ry="1.4" fill="#b39764"/><ellipse cx="246.6" cy="77.4" rx="1.8" ry="1.4" fill="#b39764"/>
<use href="#fold" transform="translate(271.1,58)"/>
<rect x="284.70000000000005" y="71.7" width="9" height="9" stroke="#b39764" fill="none" stroke-width="1.4"/><path d="M286.5,70.8 L288.1,68.6 L289.5,69.4 M283.70000000000005,72.2 L281.5,73.4 L283.70000000000005,74.4" stroke="#b39764" fill="none" stroke-width="0.9"/>
<use href="#fold" transform="translate(101.2,110.3)"/>
<path d="M114.8,126.9 L122.39999999999999,122.80000000000001 M114.8,126.9 L122.39999999999999,131.0" stroke="#b39764" fill="none" stroke-width="1.3"/><circle cx="114.8" cy="126.9" r="2.1" fill="#b39764"/><circle cx="122.39999999999999" cy="122.80000000000001" r="2.1" fill="#b39764"/><circle cx="122.39999999999999" cy="131.0" r="2.1" fill="#b39764"/>
<use href="#fold" transform="translate(143.7,110.3)"/>
<path d="M152.79999999999998,133.7 L166.39999999999998,121.3 L166.39999999999998,133.7Z M158.1,131.7 L164.5,131.7 L164.5,125.89999999999999Z" fill="#b39764" fill-rule="evenodd"/>
<use href="#fold" transform="translate(186.2,110.3)"/>
<rect x="198.39999999999998" y="121.89999999999999" width="9.6" height="12" stroke="#b39764" fill="none" stroke-width="1.3"/><path d="M200.39999999999998,121.89999999999999 L200.39999999999998,133.9 M206.0,121.89999999999999 L206.0,133.9 M200.39999999999998,127.9 L206.0,127.9" stroke="#b39764" fill="none" stroke-width="0.9"/>
</svg>
<div class="abs t" style="left:89.0px;width:60px;text-align:center;top:91.12px;line-height:7.5px;font-size:7.5px;color:#363638;letter-spacing:-0.25px">Desktop</div>
<div class="abs t" style="left:131.0px;width:60px;text-align:center;top:91.12px;line-height:7.5px;font-size:7.5px;color:#363638;letter-spacing:-0.25px">Documents</div>
<div class="abs t" style="left:173.3px;width:60px;text-align:center;top:91.12px;line-height:7.5px;font-size:7.5px;color:#363638;letter-spacing:-0.25px">Downloads</div>
<div class="abs t" style="left:215.6px;width:60px;text-align:center;top:91.12px;line-height:7.5px;font-size:7.5px;color:#363638;letter-spacing:-0.25px">Music</div>
<div class="abs t" style="left:258.1px;width:60px;text-align:center;top:91.12px;line-height:7.5px;font-size:7.5px;color:#363638;letter-spacing:-0.25px">Pictures</div>
<div class="abs t" style="left:88.5px;width:60px;text-align:center;top:143.12px;line-height:7.5px;font-size:7.5px;color:#363638;letter-spacing:-0.25px">Public</div>
<div class="abs t" style="left:131.0px;width:60px;text-align:center;top:143.12px;line-height:7.5px;font-size:7.5px;color:#363638;letter-spacing:-0.25px">Templates</div>
<div class="abs t" style="left:173.0px;width:60px;text-align:center;top:143.12px;line-height:7.5px;font-size:7.5px;color:#363638;letter-spacing:-0.25px">Videos</div>
</div>
<svg class="abs" style="left:540.4px;top:204.6px" width="12" height="14" viewBox="0 0 12 14">
 <path d="M1.5,1 L1.5,11 L4,8.7 L5.8,12.4 L7.4,11.7 L5.7,8.1 L8.8,8.1Z" fill="#fff" stroke="#1a1a1a" stroke-width="1" stroke-linejoin="round"/>
</svg>
</body></html>
